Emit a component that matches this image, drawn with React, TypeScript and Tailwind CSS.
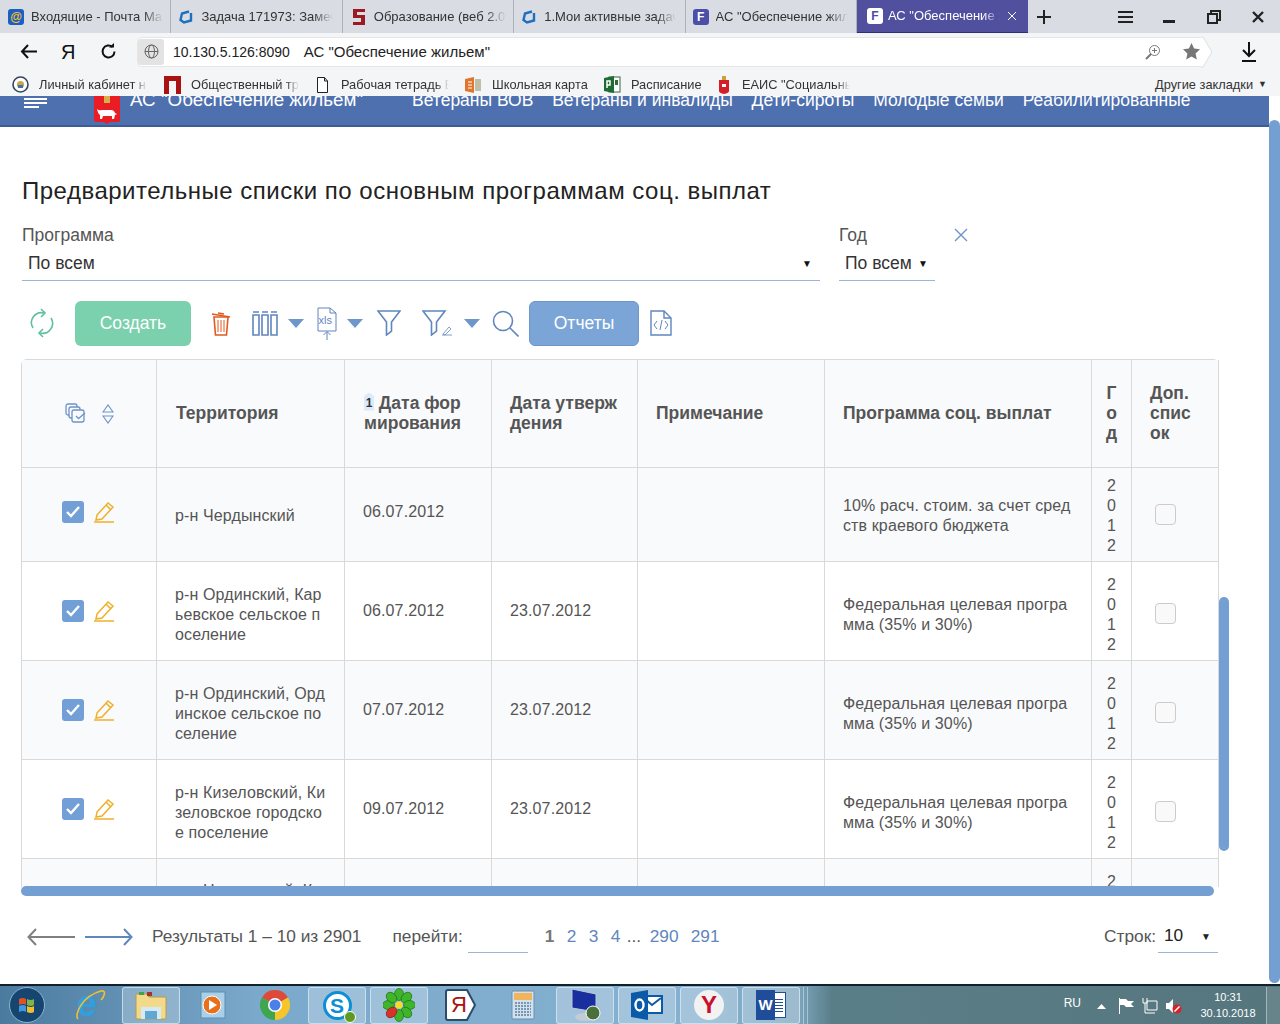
import { ReactNode } from "react";

const font = "font-['Liberation_Sans',Arial,sans-serif]";

const tabs = [
  { title: "Входящие - Почта Ма", icon: "mail", cls: "gap-[7px] pl-[8px]" },
  { title: "Задача 171973: Замеч", icon: "azure", cls: "gap-[7px] pl-[7px]" },
  { title: "Образование (веб 2.0", icon: "s", cls: "gap-[8px] pl-[9px]" },
  { title: "1.Мои активные задач", icon: "azure", cls: "gap-[7px] pl-[7px]" },
  { title: 'АС "Обеспечение жил', icon: "f", cls: "gap-[7px] pl-[7px]" },
];

const bookmarks = [
  { title: "Личный кабинет н", w: "w-[152px]", icon: "nalog" },
  { title: "Общественный тр", w: "w-[150px]", icon: "p" },
  { title: "Рабочая тетрадь Е", w: "w-[151px]", icon: "doc" },
  { title: "Школьная карта", w: "w-[139px]", icon: "office" },
  { title: "Расписание", w: "w-[111px]", icon: "project" },
  { title: 'ЕАИС "Социальнь', w: "w-[140px]", icon: "perm" },
];

const rows = [
  {
    area: "р-н Чердынский",
    created: "06.07.2012",
    approved: "",
    program: "10% расч. стоим. за счет сред\nств краевого бюджета",
    h: "h-[94px]",
    textPad: "pt-[3px]",
    datePad: "pb-[6px]",
    yearPad: "pt-[2px]",
    checkPad: "pt-0",
  },
  {
    area: "р-н Ординский, Кар\nьевское сельское п\nоселение",
    created: "06.07.2012",
    approved: "23.07.2012",
    program: "Федеральная целевая програ\nмма (35% и 30%)",
    h: "h-[99px]",
    textPad: "pt-[7px]",
    datePad: "",
    yearPad: "pt-[8px]",
    checkPad: "pt-[4px]",
  },
  {
    area: "р-н Ординский, Орд\nинское сельское по\nселение",
    created: "07.07.2012",
    approved: "23.07.2012",
    program: "Федеральная целевая програ\nмма (35% и 30%)",
    h: "h-[99px]",
    textPad: "pt-[7px]",
    datePad: "",
    yearPad: "pt-[8px]",
    checkPad: "pt-[4px]",
  },
  {
    area: "р-н Кизеловский, Ки\nзеловское городско\nе поселение",
    created: "09.07.2012",
    approved: "23.07.2012",
    program: "Федеральная целевая програ\nмма (35% и 30%)",
    h: "h-[99px]",
    textPad: "pt-[7px]",
    datePad: "",
    yearPad: "pt-[8px]",
    checkPad: "pt-[4px]",
  },
];

const gridCols = "grid-cols-[135px_188px_147px_146px_187px_267px_40px_87px]";

function TabIcon({ kind }: { kind: string }) {
  if (kind === "mail")
    return (
      <span className="flex h-4 w-4 shrink-0 items-center justify-center rounded-[3px] bg-[#1a5fc4] text-[12px] font-bold leading-none text-[#ffc21a]">
        @
      </span>
    );
  if (kind === "azure")
    return (
      <svg className="shrink-0" width="16" height="16" viewBox="0 0 16 16" fill="none" stroke="#1f6fc0" strokeWidth="2.4">
        <path d="M11 2.500 4 4.500 2.500 11 6 13.500 13 11.500V4" />
      </svg>
    );
  if (kind === "s")
    return (
      <svg className="shrink-0" width="14" height="16" viewBox="0 0 14 16">
        <path d="M1 0h12v3H5v3h8v10H1v-3h8V9H1z" fill="#9c1a22" />
      </svg>
    );
  if (kind === "fa")
    return (
      <span className="flex h-4 w-4 shrink-0 items-center justify-center rounded-[3px] bg-white text-[12px] font-bold leading-none text-[#4a4fa8]">
        F
      </span>
    );
  return (
    <span className="flex h-4 w-4 shrink-0 items-center justify-center rounded-[3px] bg-[#4a4fa8] text-[12px] font-bold leading-none text-white">
      F
    </span>
  );
}

function BookmarkIcon({ kind }: { kind: string }) {
  if (kind === "nalog")
    return (
      <svg width="17" height="17" viewBox="0 0 17 17">
        <circle cx="8.500" cy="8.500" r="7.500" fill="#fff" stroke="#33455f" strokeWidth="1.600" />
        <circle cx="8.500" cy="8.500" r="3.600" fill="#c9a84a" />
        <path d="M6 9h5v3H6z" fill="#3f6fb5" />
      </svg>
    );
  if (kind === "p")
    return (
      <svg width="17" height="18" viewBox="0 0 17 18">
        <path d="M0 0h17v18h-5V5H5v13H0z" fill="#a81212" />
      </svg>
    );
  if (kind === "doc")
    return (
      <svg width="13" height="16" viewBox="0 0 13 16" fill="#fff" stroke="#222">
        <path d="M1.500.5h7l3 3.500v11.500h-10z" />
        <path d="M8.500.5V4h3" fill="none" />
      </svg>
    );
  if (kind === "office")
    return (
      <svg width="17" height="16" viewBox="0 0 17 16">
        <path d="M0 2 9 0v16l-9-2z" fill="#e0762e" />
        <path d="M3 5h4M3 8h4M3 11h4" stroke="#fff" />
        <path d="M11 2v12M13 2v12M15 2v12" stroke="#8a8a55" />
      </svg>
    );
  if (kind === "project")
    return (
      <svg width="17" height="17" viewBox="0 0 17 17">
        <rect x="5" y="1" width="11" height="15" fill="#fff" stroke="#2f6b3a" />
        <path d="M0 2 10 0v17L0 15z" fill="#1e6b34" />
        <path d="M3 12V5h3v4H3" fill="none" stroke="#fff" strokeWidth="1.500" />
        <path d="M11 4h3v5h-3z" fill="#2f6b3a" />
      </svg>
    );
  return (
    <svg width="10" height="18" viewBox="0 0 10 18">
      <path d="M3 0h4v4H3z" fill="#c9a23a" />
      <path d="M0 4h10v11q0 2-5 3-5-1-5-3z" fill="#d41f26" />
      <rect x="3" y="8" width="4" height="3" fill="#fff" />
    </svg>
  );
}

function Caret() {
  return (
    <svg width="16" height="9" viewBox="0 0 16 9">
      <path d="M0 0h16L8 9z" fill="#6d96c9" />
    </svg>
  );
}

function TopBrowser() {
  const fade = "overflow-hidden whitespace-nowrap [mask-image:linear-gradient(to_right,black_85%,transparent)]";
  return (
    <div className={`${font} shrink-0`}>
      <div className="flex h-[33px] items-stretch bg-[#d9dce3] text-[13px] text-[#333]">
        {tabs.map((t) => (
          <div key={t.title} className={`flex w-[171.4px] shrink-0 items-center border-r border-[#aeb1ba] ${t.cls}`}>
            <TabIcon kind={t.icon} />
            <span className={`w-[132px] ${fade}`}>{t.title}</span>
          </div>
        ))}
        <div className="flex w-[171px] shrink-0 items-center gap-[5px] border-b border-[#2f2f7a] bg-[#50509f] pl-[10px] text-white">
          <TabIcon kind="fa" />
          <span className={`w-[112px] ${fade}`}>АС "Обеспечение ж</span>
          <svg className="ml-[2px]" width="10" height="10" viewBox="0 0 10 10" stroke="#fff" strokeWidth="1">
            <path d="M1 1l8 8M9 1l-8 8" />
          </svg>
        </div>
        <div className="flex flex-1 items-center text-[#111]">
          <svg className="ml-[8px]" width="16" height="16" viewBox="0 0 16 16" stroke="#222" strokeWidth="2">
            <path d="M8 1v14M1 8h14" />
          </svg>
          <svg className="ml-[66px]" width="15" height="12" viewBox="0 0 15 12" stroke="#222" strokeWidth="2">
            <path d="M0 1h15M0 6h15M0 11h15" />
          </svg>
          <svg className="ml-[30px] mt-[10px]" width="12" height="3" viewBox="0 0 12 3">
            <rect width="12" height="3" fill="#222" />
          </svg>
          <svg className="ml-[32px]" width="14" height="14" viewBox="0 0 14 14" fill="none" stroke="#222" strokeWidth="2">
            <path d="M4 4V1h9v9h-3M1 4h9v9H1z" />
          </svg>
          <svg className="ml-[31px]" width="12" height="12" viewBox="0 0 12 12" stroke="#222" strokeWidth="2.400">
            <path d="M1 1l10 10M11 1 1 11" />
          </svg>
        </div>
      </div>

      <div className="flex h-[37px] items-center bg-[#f4f5f7]">
        <svg className="ml-[20px]" width="17" height="15" viewBox="0 0 17 15" fill="none" stroke="#111" strokeWidth="2">
          <path d="M17 7.500H2M8 1 2 7.500 8 14" />
        </svg>
        <span className="ml-[24px] w-[11px] text-[20px] leading-none text-[#111]">Я</span>
        <svg className="ml-[28px]" width="17" height="17" viewBox="0 0 17 17" fill="none" stroke="#111" strokeWidth="2">
          <path d="M14.500 8.500a6 6 0 1 1-2-4.500" />
          <path d="M9 4.500h5V0" fill="#111" strokeWidth="0" />
        </svg>
        <div className="relative ml-[20px] flex h-[30px] w-[1064px] items-center rounded-l-[5px] border border-r-0 border-[#e6e6e6] bg-white">
          <span className="flex h-[26px] w-[26px] items-center justify-center rounded-[3px] bg-[#e3e3e3]">
            <svg width="15" height="15" viewBox="0 0 15 15" fill="none" stroke="#666">
              <circle cx="7.500" cy="7.500" r="6.500" />
              <ellipse cx="7.500" cy="7.500" rx="3" ry="6.500" />
              <path d="M1 7.500h13" />
            </svg>
          </span>
          <span className="ml-[9px] mt-[1px] text-[14px] text-[#222]">10.130.5.126:8090</span>
          <span className="ml-[14px] mt-[1px] text-[15px] text-[#222]">АС "Обеспечение жильем"</span>
          <svg className="absolute left-[1007px] top-[6px]" width="16" height="16" viewBox="0 0 16 16" fill="none" stroke="#777">
            <circle cx="9.500" cy="6.500" r="5" />
            <path d="M9.500 4v5M7 6.500h5" />
            <path d="M6 10 1 15" strokeWidth="2" />
          </svg>
          <svg className="absolute left-[1045px] top-[5px]" width="17" height="17" viewBox="0 0 17 17">
            <path d="m8.500 0 2.600 5.600 5.900.7-4.400 4.100 1.200 6-5.300-3-5.300 3 1.200-6L0 6.300l5.900-.7z" fill="#777" />
          </svg>
        </div>
        <svg width="12" height="32" viewBox="0 0 12 32" fill="#fff" stroke="#e0e0e0">
          <path d="M0 1h2l9 15-9 15H0" />
        </svg>
        <svg className="ml-[28px]" width="16" height="20" viewBox="0 0 16 20" fill="none" stroke="#111" strokeWidth="2">
          <path d="M8 0v14M2 8l6 6 6-6M1 19h14" />
        </svg>
      </div>

      <div className="flex h-[26px] items-center bg-[#f4f5f7] pl-[12px] pt-[3px] text-[12.800px] text-[#333]">
        {bookmarks.map((b) => (
          <div key={b.title} className={`flex ${b.w} shrink-0 items-center gap-[10px]`}>
            <span className="flex w-[17px] shrink-0 justify-center">
              <BookmarkIcon kind={b.icon} />
            </span>
            <span className="w-[108px] shrink-0 overflow-hidden whitespace-nowrap [mask-image:linear-gradient(to_right,black_88%,transparent)]">
              {b.title}
            </span>
          </div>
        ))}
        <span className="ml-auto">Другие закладки</span>
        <span className="ml-[5px] mr-[13px] text-[9px]">▼</span>
      </div>
    </div>
  );
}

function AppHeader() {
  return (
    <div className="flex h-[31px] shrink-0 items-start overflow-hidden border-b-2 border-[#3d5d97] bg-[#4e70ae] text-[17.500px] leading-[20px] text-white">
      <svg className="ml-[24px] mt-[1px]" width="23" height="12" viewBox="0 0 23 12" stroke="#fff" strokeWidth="2">
        <path d="M0 2h23M0 6h23M0 10h15" />
      </svg>
      <svg className="ml-[47px] mt-[-1px]" width="26" height="29" viewBox="0 0 26 29">
        <path d="M0 0h26v25q0 2-3 2h-7l-3 2-3-2H3q-3 0-3-2z" fill="#ea1c24" />
        <path d="M10 1h6v7h-6z" fill="#d8b04a" />
        <path d="M3 14q2 2 5 1h9q3 0 4 3l2 1-2 1-1 4h-2v-3h-9l-1 3H6v-4q-2-1-3-6z" fill="#fff" />
      </svg>
      <span className="ml-[10px] mt-[-6px] w-[282px] text-[18.800px]">АС "Обеспечение жильем"</span>
      <div className="mt-[-6px] flex gap-[18.800px]">
        <span>Ветераны ВОВ</span>
        <span>Ветераны и инвалиды</span>
        <span>Дети-сироты</span>
        <span>Молодые семьи</span>
        <span>Реабилитированные</span>
      </div>
    </div>
  );
}

function Toolbar() {
  return (
    <div className="flex h-[46px] items-center">
      <svg className="ml-[8px]" width="24" height="30" viewBox="0 0 24 30" fill="none" stroke="#5fbf9f" strokeWidth="1.600">
        <path d="M3 20A10 10 0 0 1 14 5M21 10a10 10 0 0 1-11 15" />
        <path d="m11 1 4 4-4 4M13 21l-4 4 4 4" />
      </svg>
      <button className="ml-[21px] h-[45px] w-[116px] rounded-md bg-[#7bd0ad] text-[17.500px] text-white">Создать</button>
      <svg className="ml-[20px]" width="20" height="28" viewBox="0 0 20 28" fill="none" stroke="#e2591f" strokeWidth="1.600">
        <path d="M1 5 19 8M7 4l6 1" />
        <path d="M3 8h14l-1.500 18h-11z" />
        <path d="M7 11v12M10 11v12M13 11v12" strokeWidth="1" />
      </svg>
      <svg className="ml-[21px]" width="26" height="26" viewBox="0 0 26 26" fill="none" stroke="#5f86bd" strokeWidth="1.600">
        <path d="M1 5h6v20H1zM10 5h6v20h-6zM19 5h6v20h-6z" />
        <path d="M1 2h6M10 2h6M19 2h6" />
      </svg>
      <span className="ml-[10px]">
        <Caret />
      </span>
      <svg className="ml-[13px]" width="20" height="33" viewBox="0 0 20 33" fill="none" stroke="#5f86bd">
        <path d="M1 1h12l6 5v18H1z" />
        <path d="M13 1v5h6" />
        <path d="M10 33V25M6.500 28 10 24.500l3.500 3.500" />
        <text x="1.500" y="17" fontSize="11" fill="#5f86bd" stroke="none">xls</text>
      </svg>
      <span className="ml-[10px]">
        <Caret />
      </span>
      <svg className="ml-[14px]" width="24" height="26" viewBox="0 0 24 26" fill="none" stroke="#5f86bd" strokeWidth="1.600">
        <path d="M1 1h22l-8.500 11v9l-5 4V12z" />
      </svg>
      <svg className="ml-[21px]" width="33" height="26" viewBox="0 0 33 26" fill="none" stroke="#5f86bd" strokeWidth="1.600">
        <path d="M1 1h22l-8.500 11v9l-5 4V12z" />
        <path d="m21 24 6-7 2 2-6 6zM20 25h10" strokeWidth="0.800" />
      </svg>
      <span className="ml-[9px]">
        <Caret />
      </span>
      <svg className="ml-[12px]" width="27" height="27" viewBox="0 0 27 27" fill="none" stroke="#5f86bd" strokeWidth="1.600">
        <circle cx="11" cy="11" r="9.500" />
        <path d="m18 18 8.500 8.500" />
      </svg>
      <button className="ml-[10px] h-[45px] w-[110px] rounded-md border border-[#6d96cc] bg-[#7ba5d7] text-[17.500px] text-white">Отчеты</button>
      <svg className="ml-[11px]" width="22" height="26" viewBox="0 0 22 26" fill="none" stroke="#5f86bd" strokeWidth="1.400">
        <path d="M1 1h13l7 7v17H1z" />
        <path d="M14 1v7h7" />
        <path d="M7 11l-3 4 3 4M15 11l3 4-3 4M12 10l-2 10" strokeWidth="1" />
      </svg>
    </div>
  );
}

function Cell({ children, className = "" }: { children?: ReactNode; className?: string }) {
  return (
    <div className={`flex items-center whitespace-pre-line border-r border-[#d9d9d9] ${className}`}>
      <div>{children}</div>
    </div>
  );
}

function RowActions() {
  return (
    <div className="flex items-center gap-[9px]">
      <span className="flex h-[22px] w-[22px] items-center justify-center rounded-[3px] bg-[#729fd6]">
        <svg width="14" height="12" viewBox="0 0 14 12" fill="none" stroke="#fff" strokeWidth="2.400">
          <path d="m1 6 4 4 8-9" />
        </svg>
      </span>
      <svg width="22" height="22" viewBox="0 0 22 22" fill="none" stroke="#efb02a" strokeWidth="1.500">
        <path d="M4 14 15 2l5 4L9 18l-6 1z" />
        <path d="m13 4 5 5M1 21h20" />
      </svg>
    </div>
  );
}

function Table() {
  return (
    <div className="relative ml-[-1px] mt-[13px] h-[538px] w-[1209px]">
      <div className="h-[528px] w-[1198px] overflow-hidden">
        <div className="rounded-t-md border-l border-t border-[#d9d9d9] text-[16px] leading-[20px] text-[#555]">
          <div className={`grid ${gridCols} h-[108px] border-b border-[#d9d9d9] bg-[#f9fafc] pb-0 text-[17.500px] font-bold`}>
            <div className="flex items-center justify-center gap-[15px] border-r border-[#d9d9d9]">
              <svg width="22" height="21" viewBox="0 0 22 21" fill="none" stroke="#6d93c7" strokeWidth="1.300">
                <rect x="1" y="1" width="11" height="11" rx="2" />
                <rect x="4" y="4" width="11" height="11" rx="2" fill="#f9fafc" />
                <rect x="7" y="7" width="12" height="12" rx="2" fill="#f9fafc" />
                <path d="m11 13 2.500 2.500L20 10" />
              </svg>
              <svg width="12" height="20" viewBox="0 0 12 20" fill="none" stroke="#6d93c7" strokeWidth="1.100">
                <path d="M1 8 6 1l5 7zM1 12h10l-5 7z" />
              </svg>
            </div>
            <Cell className="pb-[2px] pl-[19px]">Территория</Cell>
            <Cell className="pb-[2px] pl-[19px]">
              <span className="inline-block h-[18px] w-[10px] bg-[#ddeafa] text-center align-top text-[12px] leading-[20px] text-[#333] [clip-path:polygon(50%_0,100%_20%,100%_100%,0_100%,0_20%)]">
                1
              </span>
              {" Дата фор\nмирования"}
            </Cell>
            <Cell className="pb-[2px] pl-[18px]">{"Дата утверж\nдения"}</Cell>
            <Cell className="pb-[2px] pl-[18px]">Примечание</Cell>
            <Cell className="pb-[2px] pl-[18px]">Программа соц. выплат</Cell>
            <Cell className="justify-center pb-[2px] text-center">{"Г\nо\nд"}</Cell>
            <Cell className="pb-[2px] pl-[18px]">{"Доп.\nспис\nок"}</Cell>
          </div>

          {rows.map((r, i) => (
            <div
              key={r.area}
              className={`grid ${gridCols} ${r.h} border-b border-[#d9d9d9] font-normal tracking-[0.12px] ${i % 2 === 0 ? "bg-[#f9fafc]" : "bg-white"}`}
            >
              <div className={`flex items-center justify-center border-r border-[#d9d9d9] pr-[1px] ${r.datePad}`}>
                <RowActions />
              </div>
              <Cell className={`pl-[18px] ${r.textPad}`}>{r.area}</Cell>
              <Cell className={`pl-[18px] ${r.datePad}`}>{r.created}</Cell>
              <Cell className={`pl-[18px] ${r.datePad}`}>{r.approved}</Cell>
              <Cell />
              <Cell className={`pl-[18px] ${r.textPad}`}>{r.program}</Cell>
              <Cell className={`justify-center text-center ${r.yearPad}`}>{"2\n0\n1\n2"}</Cell>
              <div className={`flex items-center justify-center border-r border-[#d9d9d9] pr-[19px] ${r.checkPad}`}>
                <span className="h-[21px] w-[21px] rounded-[4px] border border-[#ccc] bg-[#f9f9f9]" />
              </div>
            </div>
          ))}

          <div className={`grid ${gridCols} h-[99px] bg-[#f9fafc] font-normal tracking-[0.12px]`}>
            <div className="border-r border-[#d9d9d9]" />
            <div className="whitespace-nowrap border-r border-[#d9d9d9] pl-[18px] pt-[22px]">р-н Нытвенский, К</div>
            <div className="border-r border-[#d9d9d9]" />
            <div className="border-r border-[#d9d9d9]" />
            <div className="border-r border-[#d9d9d9]" />
            <div className="border-r border-[#d9d9d9]" />
            <div className="border-r border-[#d9d9d9] pt-[13px] text-center">2</div>
            <div className="border-r border-[#d9d9d9]" />
          </div>
        </div>
      </div>
      <div className="absolute left-0 top-[527px] h-[10px] w-[1193px] rounded-full bg-[#749fd3]" />
      <div className="absolute left-[1198px] top-[238px] h-[254px] w-[10px] rounded-full bg-[#749fd3]" />
    </div>
  );
}

function Pagination() {
  return (
    <div className="mt-[23px] flex h-[33px] w-[1196px] items-center text-[17.300px] text-[#555]">
      <svg className="ml-[5px]" width="48" height="18" viewBox="0 0 48 18" fill="none" stroke="#808080" strokeWidth="2">
        <path d="M48 9H2M9 1 1.500 9 9 17" />
      </svg>
      <svg className="ml-[10px]" width="48" height="18" viewBox="0 0 48 18" fill="none" stroke="#5f86bd" strokeWidth="2">
        <path d="M0 9h46M39 1l7.500 8-7.500 8" />
      </svg>
      <span className="ml-[19px]">Результаты 1 – 10 из 2901</span>
      <span className="ml-[31px]">перейти:</span>
      <span className="ml-[5px] h-[33px] w-[60px] border-b border-[#9ab5d8]" />
      <div className="ml-[17px] flex items-center">
        <span className="w-[22px] font-bold text-[#777]">1</span>
        <span className="w-[22px] text-[#5f86bd]">2</span>
        <span className="w-[22px] text-[#5f86bd]">3</span>
        <span className="w-[16px] text-[#5f86bd]">4</span>
        <span className="w-[23px]">...</span>
        <span className="w-[41px] text-[#5f86bd]">290</span>
        <span className="text-[#5f86bd]">291</span>
      </div>
      <span className="ml-auto text-[#555]">Строк:</span>
      <div className="ml-[2px] flex h-[33px] w-[60px] items-center border-b border-[#9ab5d8] pl-[6px] text-[#222]">
        <span>10</span>
        <span className="ml-auto mr-[7px] text-[10px]">▼</span>
      </div>
    </div>
  );
}

function Taskbar() {
  const btn = "flex h-[37px] shrink-0 items-center justify-center rounded-[3px] border border-[#dcecf6]/70 bg-white/25";
  const slot = "flex shrink-0 justify-center";
  return (
    <div className={`${font} flex h-[40px] shrink-0 items-center border-t-2 border-[#10202c] bg-[linear-gradient(90deg,#4a7a9e_0%,#7ba9cc_20%,#86b1d0_55%,#7ba4bc_62.500%,#5a7e88_65%,#56767e_100%)]`}>
      <svg className="ml-[9px] shrink-0" width="36" height="36" viewBox="0 0 36 36">
        <circle cx="18" cy="18" r="17.500" fill="#16466f" stroke="#8fb4d0" />
        <path d="M10 12q4-2 7 0v6q-3-2-7 0z" fill="#e2502a" />
        <path d="M18 12q4 2 7 0v6q-3 2-7 0z" fill="#7ab648" />
        <path d="M10 19q4-2 7 0v6q-3-2-7 0z" fill="#3d9ae0" />
        <path d="M18 19q4 2 7 0v6q-3 2-7 0z" fill="#f4bb2c" />
      </svg>
      <div className={`${slot} ml-[26px] w-[38px]`}>
        <svg width="32" height="34" viewBox="0 0 32 34" fill="none">
          <text x="3" y="28" fontSize="36" fontWeight="700" fill="#2f9fe0" fontFamily="Liberation Sans">e</text>
          <path d="M4 31C0 27 8 8 27 3c6-1 3 6 0 9" stroke="#f0c030" strokeWidth="1.600" />
        </svg>
      </div>
      <div className={`${btn} ml-[13px] w-[58px]`}>
        <svg width="32" height="30" viewBox="0 0 32 30">
          <path d="M1 4h11l2 3h17v22H1z" fill="#f3d98a" stroke="#b89a50" />
          <path d="M4 2h5v3H4z" fill="#3fa34d" />
          <path d="M12 2h5v4h-5z" fill="#a8332a" />
          <path d="M6 17h20v12H6z" fill="#d6eaf5" />
          <path d="M10 21h12v8H10z" fill="#5fa8d4" />
        </svg>
      </div>
      <div className={`${slot} ml-[2px] w-[61px]`}>
        <svg width="26" height="30" viewBox="0 0 26 30">
          <rect x="1" y="2" width="24" height="26" fill="#a9d0e8" stroke="#5a8fb0" />
          <circle cx="12" cy="15" r="9" fill="#e8701a" stroke="#fff" />
          <path d="m9 10 8 5-8 5z" fill="#fff" />
        </svg>
      </div>
      <div className={`${slot} ml-[1px] w-[62px]`}>
        <svg width="30" height="30" viewBox="0 0 30 30">
          <path d="M15 15 2 7.500A15 15 0 0 1 28 7.500z" fill="#dd4a3a" />
          <path d="M15 15 28 7.500A15 15 0 0 1 15 30z" fill="#f6c52b" />
          <path d="M15 15 15 30A15 15 0 0 1 2 7.500z" fill="#3fa650" />
          <circle cx="15" cy="15" r="7" fill="#fff" />
          <circle cx="15" cy="15" r="5.500" fill="#4a80e8" />
        </svg>
      </div>
      <div className={`${btn} ml-[2px] w-[58px]`}>
        <span className="relative flex h-[29px] w-[29px] items-center justify-center rounded-full border-[3px] border-[#0b8fd6] bg-white text-[21px] font-bold leading-none text-[#0b8fd6]">
          S
          <span className="absolute bottom-[-6px] right-[-7px] h-[12px] w-[12px] rounded-full border border-white bg-[#5f9a1f]" />
        </span>
      </div>
      <div className={`${btn} ml-[4px] w-[58px]`}>
        <svg width="32" height="34" viewBox="0 0 32 34">
          {[0, 45, 90, 135, 180, 270, 315].map((a) => (
            <ellipse key={a} cx="16" cy="6.500" rx="4.500" ry="6" fill="#3fb52a" stroke="#1b6d14" strokeWidth="0.700" transform={`rotate(${a} 16 17)`} />
          ))}
          <ellipse cx="16" cy="6.500" rx="4.500" ry="6" fill="#d8332a" stroke="#8c1a14" strokeWidth="0.700" transform="rotate(225 16 17)" />
          <circle cx="16" cy="17" r="3.500" fill="#f5dc2a" />
        </svg>
      </div>
      <div className={`${slot} relative ml-[2px] w-[60px]`}>
        <svg width="31" height="32" viewBox="0 0 31 32">
          <path d="M3 1h19l8 15-8 15H3q-2 0-2-2V3q0-2 2-2z" fill="#fff" stroke="#2c4c6b" strokeWidth="2" />
        </svg>
        <span className="absolute left-[21px] top-[3px] text-[22px] leading-[26px] text-[#a81212]">Я</span>
      </div>
      <div className={`${slot} ml-[2px] w-[61px]`}>
        <svg width="24" height="30" viewBox="0 0 24 30">
          <rect x="1" y="1" width="22" height="28" rx="1" fill="#cfe0ee" stroke="#6f8ea8" />
          <rect x="3" y="3" width="18" height="7" fill="#f2b45a" />
          <path d="M4 13h16M4 16h16M4 19h16M4 22h16M4 25h16" stroke="#5f7f9a" strokeWidth="1.500" strokeDasharray="2 1" />
        </svg>
      </div>
      <div className={`${btn} ml-[3px] w-[58px]`}>
        <svg width="32" height="34" viewBox="0 0 32 34">
          <path d="M3 1 27 6v18L3 20z" fill="#1a2f9e" stroke="#bcc8de" />
          <ellipse cx="16" cy="29" rx="10" ry="4" fill="#c4ccd4" />
          <circle cx="24" cy="25" r="7" fill="#4a6f3a" stroke="#fff" />
        </svg>
      </div>
      <div className={`${btn} ml-[4px] w-[58px]`}>
        <svg width="32" height="30" viewBox="0 0 32 30">
          <path d="M12 6h19v17H12z" fill="#fff" stroke="#0a5aa8" strokeWidth="2" />
          <path d="m13 8 8 7 9-7" fill="none" stroke="#0a5aa8" strokeWidth="2" />
          <path d="M0 3 17 0v30L0 27z" fill="#0a5aa8" />
          <ellipse cx="8.500" cy="15" rx="4" ry="5.500" fill="none" stroke="#fff" strokeWidth="2.400" />
        </svg>
      </div>
      <div className={`${btn} ml-[4px] w-[58px]`}>
        <span className="flex h-[30px] w-[30px] items-center justify-center rounded-full bg-[#f2f2f2] text-[24px] font-bold leading-none text-[#c8102e]">
          Y
        </span>
      </div>
      <div className={`${btn} ml-[4px] w-[58px]`}>
        <span className="relative flex h-[30px] w-[30px] items-center">
          <span className="absolute right-0 top-[2px] flex h-[26px] w-[20px] flex-col items-end justify-center gap-[2px] border border-[#1f4d99] bg-white pr-[2px]">
            <span className="h-px w-[9px] bg-[#1f4d99]" />
            <span className="h-px w-[9px] bg-[#1f4d99]" />
            <span className="h-px w-[9px] bg-[#1f4d99]" />
            <span className="h-px w-[9px] bg-[#1f4d99]" />
            <span className="h-px w-[9px] bg-[#1f4d99]" />
          </span>
          <span className="relative flex h-[30px] w-[19px] items-center justify-center bg-[#1f4d99] text-[15px] font-bold text-white">W</span>
        </span>
      </div>
      <span className="ml-[3px] h-[37px] w-px bg-white/40" />
      <span className="ml-[3px] h-[37px] w-px bg-white/40" />
      <div className="ml-auto mr-[10px] flex items-center text-white">
        <span className="mt-[-4px] text-[12px]">RU</span>
        <svg className="ml-[16px] mt-[2px]" width="9" height="5" viewBox="0 0 9 5">
          <path d="M0 5 4.500 0 9 5z" fill="#fff" />
        </svg>
        <svg className="ml-[12px] mt-[2px]" width="16" height="16" viewBox="0 0 16 16" fill="#fff">
          <path d="M1 0h1v16H1zM2 1h6l2 2h6l-3 3 3 3H8L6 7H2z" />
        </svg>
        <svg className="ml-[8px] mt-[2px]" width="16" height="16" viewBox="0 0 16 16" fill="none" stroke="#fff">
          <path d="M5 3h10v9H5zM1 0v5h4V0M3 5v10h10" />
        </svg>
        <svg className="ml-[8px] mt-[2px]" width="16" height="16" viewBox="0 0 16 16">
          <path d="M0 5h3l4-4v14l-4-4H0z" fill="#fff" />
          <circle cx="11" cy="11" r="4.500" fill="#d8222a" />
          <path d="m8.500 13.500 5-5" stroke="#fff" strokeWidth="1.500" />
        </svg>
        <div className="ml-[18px] w-[56px] text-center text-[11px] leading-[16px]">
          <div>10:31</div>
          <div className="whitespace-nowrap">30.10.2018</div>
        </div>
      </div>
      <div className="h-[37px] w-[14px] border-l border-white/40 bg-white/10" />
    </div>
  );
}

export default function App() {
  return (
    <div className={`${font} flex h-[1024px] w-[1280px] flex-col overflow-hidden bg-white`}>
      <TopBrowser />
      <div className="relative min-h-0 flex-1">
        <div className="mr-[11px]">
          <AppHeader />
          <div className="pl-[22px]">
            <h1 className="mt-[48px] text-[24px] leading-[32px] tracking-[0.5px] text-[#222]">
              Предварительные списки по основным программам соц. выплат
            </h1>
            <div className="mt-[16px] flex text-[#333]">
              <div className="w-[798px]">
                <div className="text-[17.500px] leading-[24px] text-[#555]">Программа</div>
                <div className="flex h-[34px] items-center border-b border-[#9ab5d8] pl-[6px] text-[17.500px]">
                  По всем
                  <span className="ml-auto mr-[8px] text-[10px] text-[#111]">▼</span>
                </div>
              </div>
              <div className="ml-[19px] w-[96px]">
                <div className="text-[17.500px] leading-[24px] text-[#555]">Год</div>
                <div className="flex h-[34px] items-center border-b border-[#9ab5d8] pl-[6px] text-[17.500px]">
                  По всем
                  <span className="ml-auto mr-[7px] text-[10px] text-[#111]">▼</span>
                </div>
              </div>
              <svg className="ml-[19px] mt-[5px]" width="14" height="14" viewBox="0 0 14 14" stroke="#6d93c7" strokeWidth="1.400">
                <path d="m1 1 12 12M13 1 1 13" />
              </svg>
            </div>
            <div className="mt-[19px]">
              <Toolbar />
            </div>
            <Table />
            <Pagination />
          </div>
        </div>
        <div className="absolute right-0 top-[24px] h-[863px] w-[11px] rounded-full bg-[#749fd3]" />
      </div>
      <Taskbar />
    </div>
  );
}
